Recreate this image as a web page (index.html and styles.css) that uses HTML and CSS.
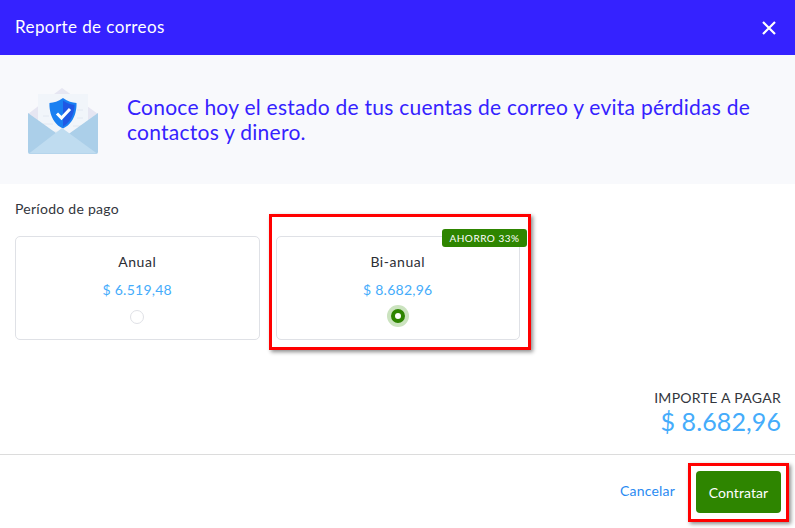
FILE: index.html
```html
<!DOCTYPE html>
<html lang="es">
<head>
<meta charset="utf-8">
<title>Reporte de correos</title>
<link rel="stylesheet" href="styles.css">
</head>
<body>
<div class="modal">
  <header class="head">
    <h1 class="head-title">Reporte de correos</h1>
    <button class="close" aria-label="Cerrar">
      <svg width="16" height="16" viewBox="0 0 16 16"><path d="M2 2 14 14M14 2 2 14" stroke="#fff" stroke-width="2.2" fill="none"/></svg>
    </button>
  </header>
  <section class="hero">
    <svg class="hero-icon" width="72" height="70" viewBox="0 0 72 70">
      <path d="M1 28 35 2 71 28 36 56Z" fill="#e6e6f2"/>
      <rect x="11" y="8" width="50" height="48" fill="#f1f5fa"/>
      <g stroke="#e2e8f1" stroke-width="1">
        <path d="M16 30h6M16 38h10M16 46h20M50 24h6M50 32h6M46 40h10"/>
      </g>
      <path d="M36 12c5 3.500 9 4.500 13.500 5 0 0 1.500 18.500-13.500 25.500C21 35.500 22.500 17 22.500 17c4.500-.5 8.500-1.500 13.500-5Z" fill="#1a80f2"/>
      <path d="M36 14.500c4.500 3 8 4 11.500 4.500 0 0 .5 15-11.500 21.500Z" fill="#2058e4"/>
      <path d="M30 27.500l4.500 4.500L43 23" stroke="#fff" stroke-width="3" fill="none"/>
      <path d="M1 27 36 52 71 27V66a2 2 0 0 1-2 2H3a2 2 0 0 1-2-2Z" fill="#abcfe9"/>
      <path d="M2 67.500 35 42 70 67.500Z" fill="#bfdcf0"/>
    </svg>
    <p class="hero-text">Conoce hoy el estado de tus cuentas de correo y evita pérdidas de contactos y dinero.</p>
  </section>
  <main class="body">
    <h2 class="period">Período de pago</h2>
    <div class="plans">
      <div class="plan">
        <div class="plan-name">Anual</div>
        <div class="plan-price">$ 6.519,48</div>
        <span class="radio"></span>
      </div>
      <div class="plan">
        <span class="badge">AHORRO 33%</span>
        <div class="plan-name">Bi-anual</div>
        <div class="plan-price">$ 8.682,96</div>
        <span class="radio radio-on"></span>
        <span class="mark mark-plan"></span>
      </div>
    </div>
    <div class="total">
      <div class="total-label">IMPORTE A PAGAR</div>
      <div class="total-price">$ 8.682,96</div>
    </div>
  </main>
  <footer class="foot">
    <a class="cancel" href="#">Cancelar</a>
    <button class="submit">Contratar<span class="mark mark-btn"></span></button>
  </footer>
</div>
</body>
</html>
```
FILE: styles.css
```css
* { box-sizing: border-box; }
html, body { margin: 0; padding: 0; }
body {
  width: 795px;
  height: 528px;
  overflow: hidden;
  background: #fff;
  font-family: "Lato", "Noto Sans", sans-serif;
  color: #2b2d33;
}
.modal { display: flex; flex-direction: column; height: 528px; }
.head {
  height: 55px;
  flex: none;
  background: #3522ff;
  display: flex;
  align-items: center;
  justify-content: space-between;
  padding: 0 18px 2px 15px;
}
.head-title { margin: 0; font-size: 17px; font-weight: 400; color: #fff; letter-spacing: .42px; }
.close { background: none; border: 0; padding: 0; width: 16px; height: 16px; display: flex; margin-top: 2px; }
.hero {
  height: 129px;
  flex: none;
  background: #f8f9fc;
  display: flex;
  align-items: center;
  padding: 0 40px 0 27px;
  gap: 28px;
}
.hero-icon { flex: none; margin-top: 2px; }
.hero-text { margin: 0 0 2px; font-size: 21px; line-height: 25px; color: #3522ff; letter-spacing: .25px; }
.body { flex: 1; padding: 15px 14px 0 15px; display: flex; flex-direction: column; }
.period { margin: 0; font-size: 14px; line-height: 19px; font-weight: 400; color: #33363d; letter-spacing: .27px; }
.plans { display: flex; gap: 16px; margin-top: 18px; width: 505px; }
.plan {
  position: relative;
  flex: 1;
  height: 104px;
  border: 1px solid #dfe1e6;
  border-radius: 5px;
  display: flex;
  flex-direction: column;
  align-items: center;
  padding-top: 15px;
}
.plan-name { font-size: 14px; line-height: 19px; letter-spacing: .55px; color: #2b2d33; }
.plan-price { font-size: 14px; line-height: 19px; margin-top: 9px; color: #45acfb; letter-spacing: .25px; }
.radio {
  width: 14px;
  height: 14px;
  margin-top: 11px;
  border: 1px solid #dfe1e6;
  border-radius: 50%;
  background: #fff;
}
.radio-on {
  margin-top: 10px;
  border: 4px solid #2e8500;
  box-shadow: 0 0 0 4px #cbe3bf;
}
.badge {
  position: absolute;
  top: -8px;
  right: -8px;
  width: 85px;
  height: 18px;
  background: #2e8500;
  color: #fff;
  border-radius: 3px;
  font-size: 10px;
  line-height: 18px;
  text-align: center;
  letter-spacing: .5px;
}
.mark {
  position: absolute;
  border: 3px solid #f00;
  box-shadow: 2px 2px 4px rgba(0, 0, 0, .45);
  pointer-events: none;
}
.mark-plan { left: -8px; top: -23px; width: 262px; height: 136px; }
.mark-btn { left: -8px; top: -8px; width: 101px; height: 59px; }
.total { margin-top: 48px; text-align: right; }
.total-label { font-size: 14px; line-height: 19px; color: #33363d; letter-spacing: .3px; }
.total-price { font-size: 25px; line-height: 30px; color: #45acfb; letter-spacing: .1px; margin-top: -1px; }
.foot {
  height: 74px;
  flex: none;
  border-top: 1px solid #dcdcdc;
  display: flex;
  align-items: center;
  justify-content: flex-end;
  gap: 21px;
  padding: 0 14px 0 0;
}
.cancel { font-size: 14px; color: #2a8bf2; text-decoration: none; letter-spacing: .2px; margin-top: -2px; }
.submit {
  position: relative;
  width: 85px;
  height: 42px;
  background: #2e8500;
  border: 0;
  border-radius: 4px;
  color: #fff;
  font: inherit;
  font-size: 14px;
  letter-spacing: .05px;
  padding: 0;
  margin-top: 1px;
}
```
